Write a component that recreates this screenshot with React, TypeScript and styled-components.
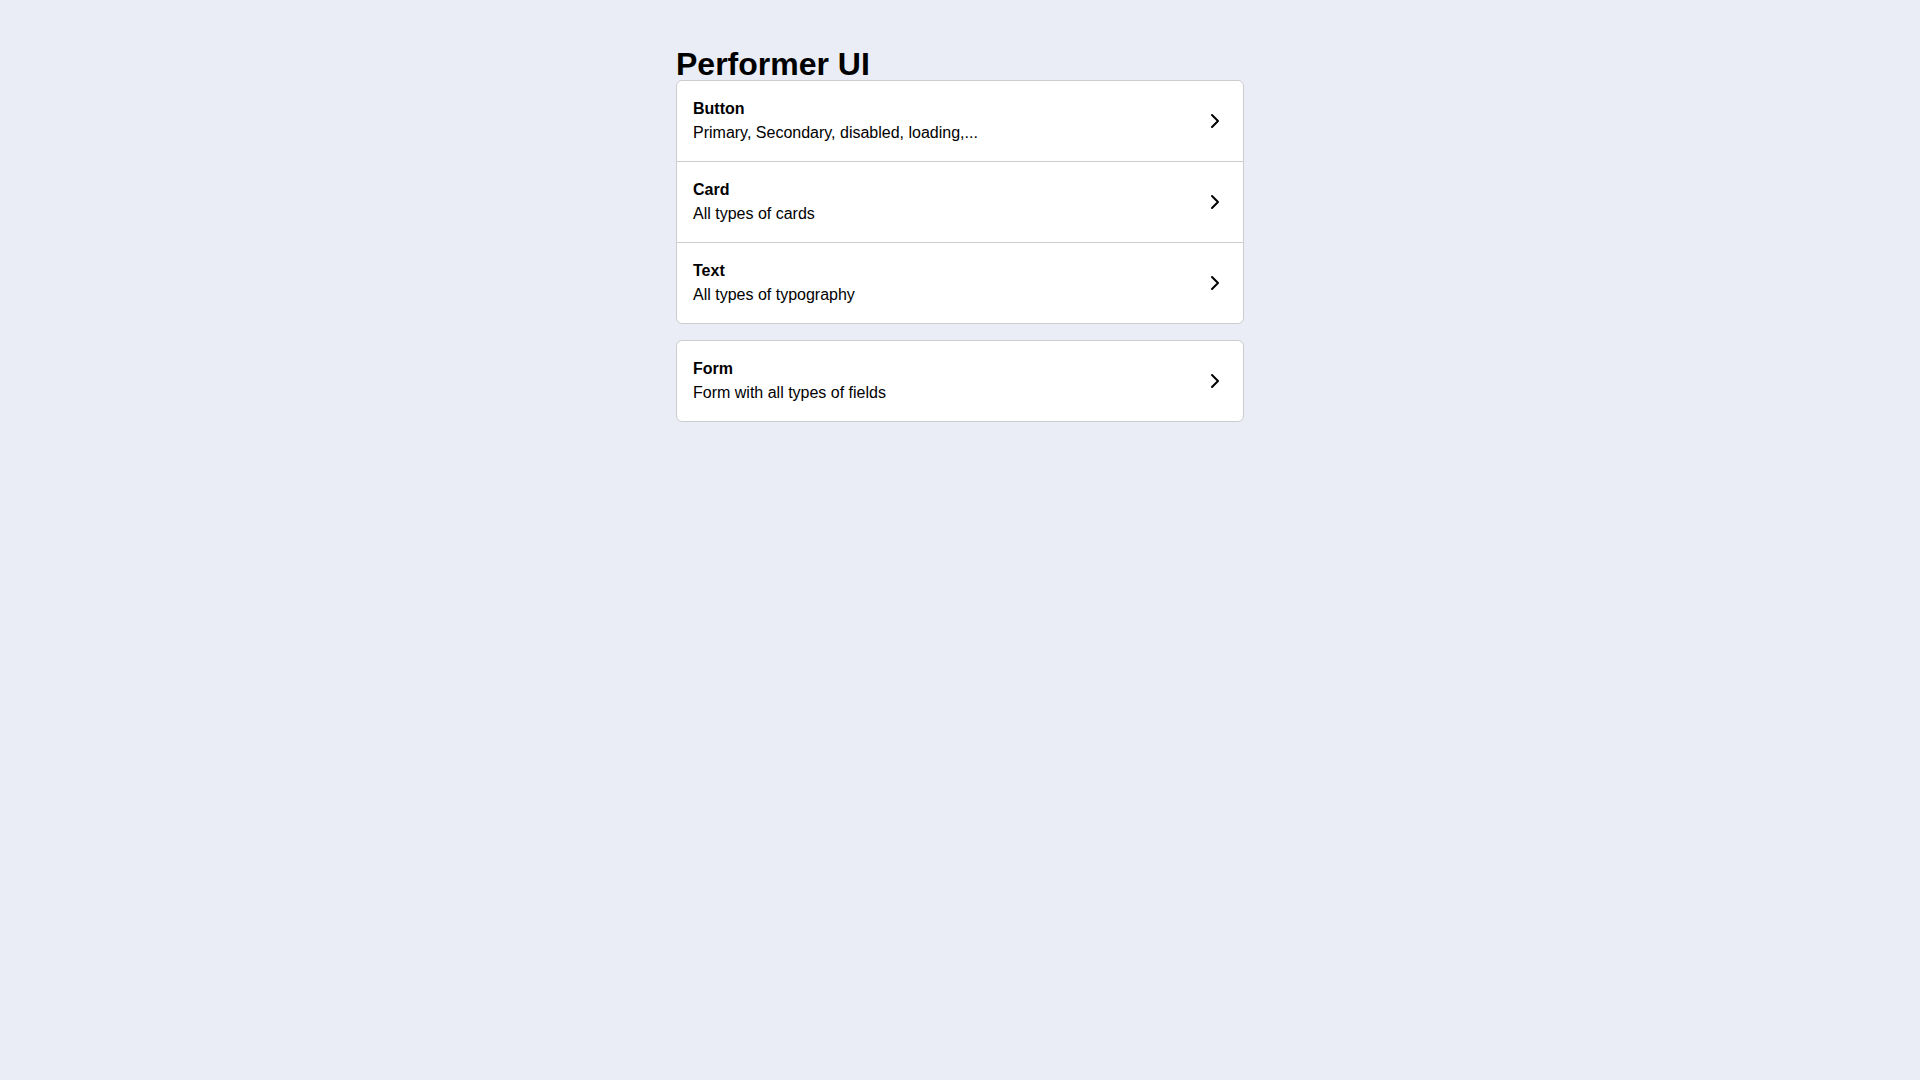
import React from "react";
import styled, { createGlobalStyle } from "styled-components";
import { ChevronRight } from "lucide-react";

const GlobalStyle = createGlobalStyle`
  html, body {
    margin: 0;
    padding: 0;
    background: #eaedf5;
    font-family: "Liberation Sans", Arial, sans-serif;
    color: #000;
  }
`;

const Page = styled.main`
  min-height: 100vh;
  display: flex;
  justify-content: center;
  padding-top: 48px;
  box-sizing: border-box;
`;

const Column = styled.div`
  width: 568px;
  display: flex;
  flex-direction: column;
`;

const Title = styled.h1`
  margin: 0;
  font-size: 32px;
  font-weight: 700;
  line-height: 32px;
`;

const Group = styled.div`
  display: flex;
  flex-direction: column;
  gap: 16px;
`;

const Card = styled.div`
  background: #fff;
  border: 1px solid #cccccc;
  border-radius: 6px;
  overflow: hidden;
`;

const Row = styled.a`
  display: flex;
  align-items: center;
  justify-content: space-between;
  padding: 16px;
  color: #000;
  text-decoration: none;
  cursor: pointer;
  & + & {
    border-top: 1px solid #cccccc;
  }
`;

const Texts = styled.div`
  display: flex;
  flex-direction: column;
`;

const RowTitle = styled.span`
  font-size: 16px;
  font-weight: 700;
  line-height: 24px;
`;

const RowSub = styled.span`
  font-size: 16px;
  line-height: 24px;
`;

const Chevron = styled(ChevronRight)`
  flex-shrink: 0;
  color: #000;
`;

type Item = { title: string; subtitle: string };

const groups: Item[][] = [
  [
    { title: "Button", subtitle: "Primary, Secondary, disabled, loading,..." },
    { title: "Card", subtitle: "All types of cards" },
    { title: "Text", subtitle: "All types of typography" },
  ],
  [{ title: "Form", subtitle: "Form with all types of fields" }],
];

export default function App() {
  return (
    <>
      <GlobalStyle />
      <Page>
        <Column>
          <Title>Performer UI</Title>
          <Group>
            {groups.map((g, i) => (
              <Card key={i}>
                {g.map((item) => (
                  <Row key={item.title}>
                    <Texts>
                      <RowTitle>{item.title}</RowTitle>
                      <RowSub>{item.subtitle}</RowSub>
                    </Texts>
                    <Chevron size={24} strokeWidth={2} />
                  </Row>
                ))}
              </Card>
            ))}
          </Group>
        </Column>
      </Page>
    </>
  );
}
